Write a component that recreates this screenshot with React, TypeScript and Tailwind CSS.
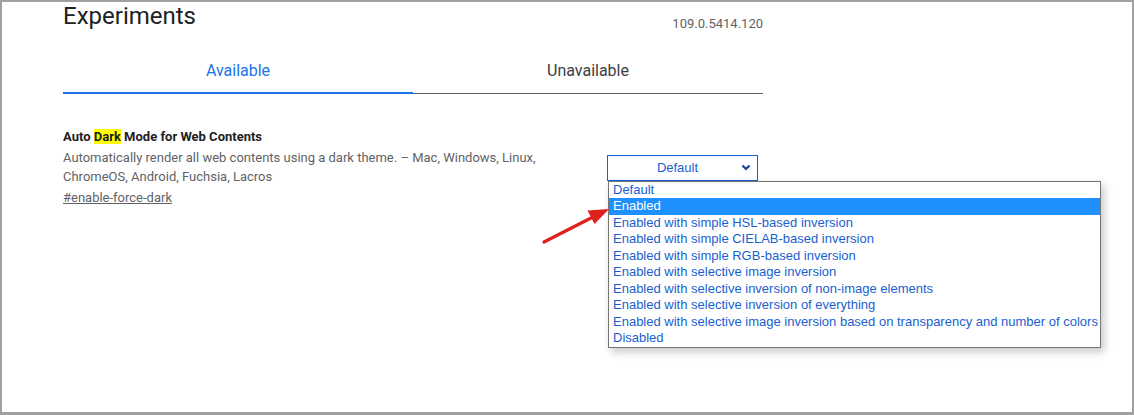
import React from "react";

const options = [
  "Default",
  "Enabled",
  "Enabled with simple HSL-based inversion",
  "Enabled with simple CIELAB-based inversion",
  "Enabled with simple RGB-based inversion",
  "Enabled with selective image inversion",
  "Enabled with selective inversion of non-image elements",
  "Enabled with selective inversion of everything",
  "Enabled with selective image inversion based on transparency and number of colors",
  "Disabled",
];

export default function App() {
  return (
    <div className="relative w-[1134px] h-[415px] overflow-hidden bg-white border-2 border-b-[3px] border-[#a0a0a0] font-['Roboto',sans-serif]">
      <div className="ml-[61px] w-[700px]">
        <div className="flex items-start justify-between">
          <h1 className="text-[24px] leading-[28px] text-[#202124] font-normal">Experiments</h1>
          <div className="mt-[11.5px] text-[13px] leading-[20px] text-[#5f6368]">109.0.5414.120</div>
        </div>

        <div className="mt-[25px] flex border-b border-[#5f6368]">
          <div className="relative flex-1 text-center text-[16px] leading-6 pb-[10px] text-[#1a73e8]">
            Available
            <div className="absolute left-0 right-0 bottom-[-1px] h-[2px] bg-[#1a73e8]" />
          </div>
          <div className="flex-1 text-center text-[16px] leading-6 pb-[10px] text-[#3c4043]">Unavailable</div>
        </div>

        <div className="mt-[33px] flex items-start">
          <div className="w-[544px] pr-[40px]">
            <div className="text-[13px] leading-[20px] font-bold text-[#202124]">
              Auto <span className="bg-[#ffff00]">Dark</span> Mode for Web Contents
            </div>
            <p className="mt-[1px] text-[13px] leading-[19px] text-[#5f6368]">
              Automatically render all web contents using a dark theme. – Mac, Windows, Linux, ChromeOS, Android, Fuchsia, Lacros
            </p>
            <a className="mt-[2px] block text-[13px] leading-[19px] text-[#5f6368] underline">#enable-force-dark</a>
          </div>

          <div className="relative mt-[28px] w-[151px]">
            <div className="flex h-[26px] items-center border border-[#1a5fd0] bg-white font-['Liberation_Sans',Arial,sans-serif] text-[13px] text-[#1a5fd0]">
              <span className="flex-1 text-center pl-[2px] pr-[12px]">Default</span>
              <svg className="absolute right-[7px] top-[9px]" width="10" height="7" viewBox="0 0 10 7">
                <polyline points="1.5,1.5 5,5 8.5,1.5" fill="none" stroke="#1a3f9a" strokeWidth="2.2" />
              </svg>
            </div>

            <div className="absolute left-[1px] top-full w-[493px] border border-[#767676] bg-white shadow-[3px_4px_8px_rgba(0,0,0,0.22)] font-['Liberation_Sans',Arial,sans-serif] text-[13px]">
              {options.map((o, i) => (
                <div
                  key={o}
                  className={
                    i === 1
                      ? "h-[16.5px] leading-[16.5px] px-[4px] bg-[#1e90ff] text-white whitespace-nowrap"
                      : "h-[16.5px] leading-[16.5px] px-[4px] text-[#1a5fd0] whitespace-nowrap"
                  }
                >
                  {o}
                </div>
              ))}
            </div>
          </div>
        </div>
      </div>

      <svg className="absolute left-[528px] top-[193px]" width="90" height="60" viewBox="0 0 90 60">
        <line x1="14" y1="47" x2="63" y2="22" stroke="#e0201c" strokeWidth="3.2" strokeLinecap="round" />
        <polygon points="79,14 64.5,29 57.5,15.5" fill="#e0201c" />
      </svg>
    </div>
  );
}
